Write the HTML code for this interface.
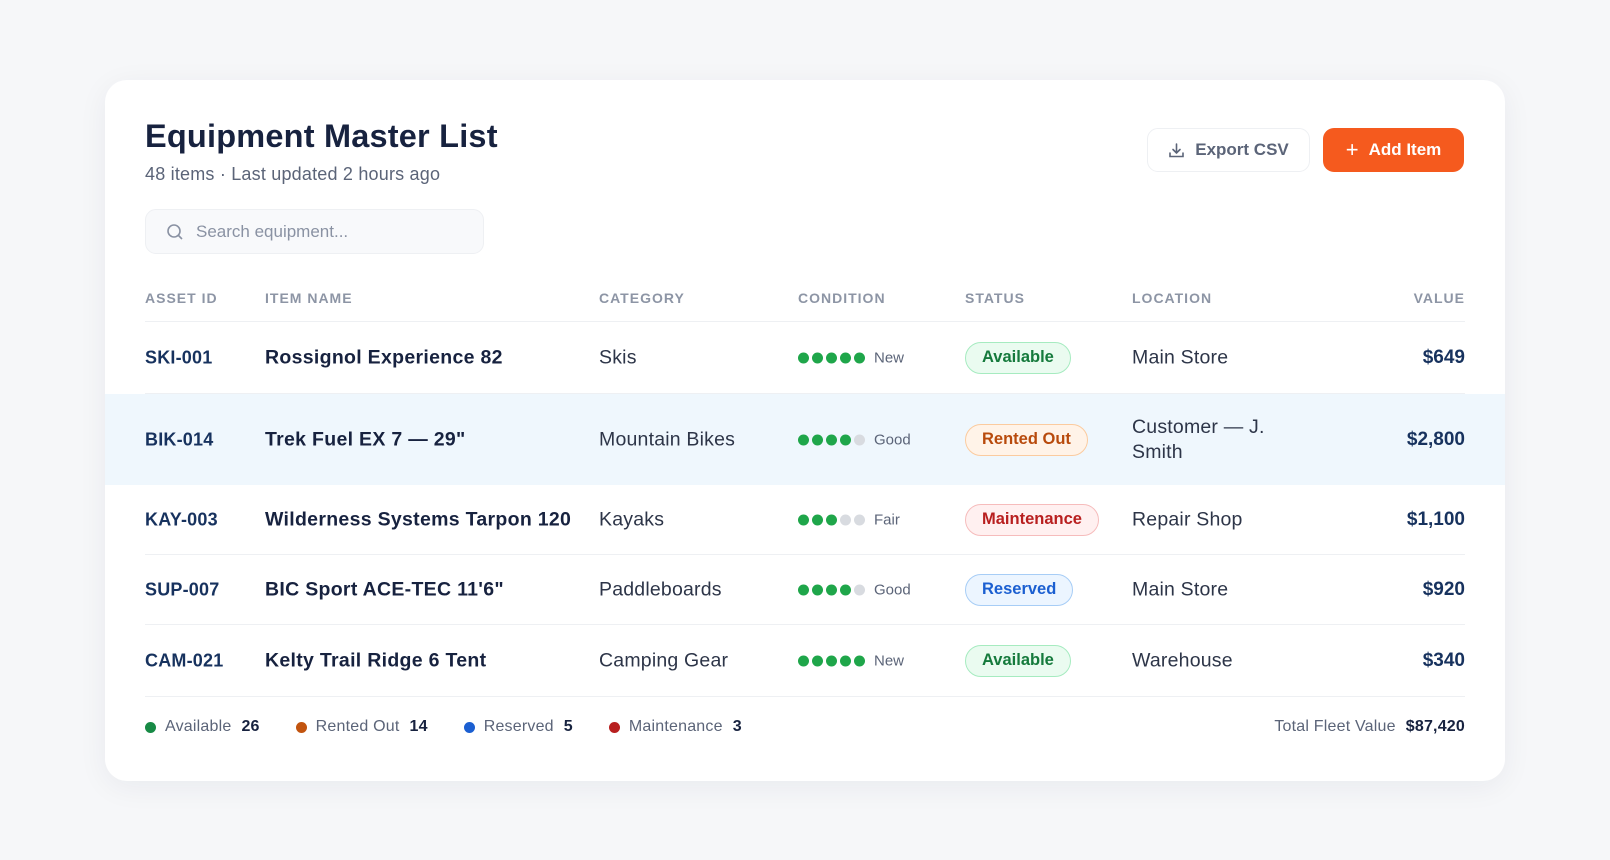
<!DOCTYPE html>
<html><head><meta charset="utf-8"><style>
*{box-sizing:border-box;margin:0;padding:0}
body{width:1610px;height:860px;background:#f6f7f9;font-family:"Liberation Sans",sans-serif;color:#1a2540;position:relative;overflow:hidden}
.card{position:absolute;left:105px;top:80px;width:1400px;height:701px;background:#fff;border-radius:22px;box-shadow:0 6px 30px rgba(20,30,60,.06)}
.abs{position:absolute}
h1{position:absolute;left:40px;top:38px;font-size:32.5px;font-weight:700;color:#17223f;letter-spacing:.2px}
.sub{left:40px;top:84px;font-size:18px;color:#5b6478;letter-spacing:.2px}
.search{left:40px;top:129px;width:339px;height:45px;background:#f8f9fb;border:1px solid #eef0f3;border-radius:11px;font-size:17px;color:#8a92a3;padding:0 0 0 50px;line-height:43px}
.search svg{position:absolute;left:20px;top:13px}
.btn{top:48px;height:44px;border-radius:11px;font-size:17px;font-weight:700;display:flex;align-items:center;justify-content:center;gap:10px}
.exp{left:1042px;width:163px;border:1.5px solid #eef0f3;color:#5b6478;background:#fff}
.add{left:1218px;width:141px;background:#f55a1e;color:#fff}
.th{top:210px;font-size:14px;font-weight:700;color:#8d95a5;letter-spacing:1px}
.row{position:absolute;left:0;width:1400px;border-bottom:1.5px solid #eef0f3}
.row.hl{background:#eff7fd}
.row>div{position:absolute;top:50%;transform:translateY(-50%)}
.id{left:40px;font-size:18px;font-weight:700;color:#17325e;letter-spacing:.2px}
.nm{left:160px;font-size:19.5px;font-weight:700;color:#17223f;letter-spacing:.3px}
.cat{left:494px;font-size:19.5px;color:#2d3548;letter-spacing:.2px}
.cond{left:693px;display:flex;align-items:center;font-size:15px;color:#5b6478}
.d{width:11px;height:11px;border-radius:50%;background:#1fa64a;margin-right:3px}
.d.o{background:#d8dbe0}
.cond span{margin-left:6px}
.st{left:860px;height:32px;border-radius:16px;padding:0 16px;font-size:16.5px;font-weight:700;line-height:29px;border:1.5px solid}
.av{background:#eafbf0;border-color:#a6ebc0;color:#157a3c}
.ro{background:#fff3e8;border-color:#fbcb9f;color:#b84a0c}
.mt{background:#fff0f0;border-color:#f6bcbc;color:#b81f1f}
.rs{background:#ecf5ff;border-color:#a7cdf6;color:#1b5fd1}
.loc{left:1027px;font-size:19.5px;color:#2d3548;line-height:25px;letter-spacing:.2px}
.val{right:40px;font-size:19px;font-weight:700;color:#17325e}
.ft{top:638px;font-size:16px;color:#5b6478;display:flex;align-items:center;letter-spacing:.2px}
.ft i{display:inline-block;width:11px;height:11px;border-radius:50%;margin-right:9px}
.ft b{color:#17223f;margin-left:10px;margin-right:36px}
</style></head><body>
<div class="card">
<h1>Equipment Master List</h1>
<div class="abs sub">48 items · Last updated 2 hours ago</div>
<div class="abs search"><svg width="18" height="18" viewBox="0 0 18 18" fill="none" stroke="#8a92a3" stroke-width="1.6"><circle cx="8" cy="8" r="6"/><path d="M12.5 12.5L16 16"/></svg>Search equipment...</div>
<div class="abs btn exp"><svg width="17" height="17" viewBox="0 0 17 17" fill="none" stroke="#5b6478" stroke-width="1.6" stroke-linecap="round"><path d="M8.5 2v9M5 7.5l3.5 3.5 3.5-3.5M2 11v3.5h13V11"/></svg>Export CSV</div>
<div class="abs btn add"><span style="font-weight:400;font-size:22px;line-height:1">+</span>Add Item</div>
<div class="abs th" style="left:40px">ASSET ID</div>
<div class="abs th" style="left:160px">ITEM NAME</div>
<div class="abs th" style="left:494px">CATEGORY</div>
<div class="abs th" style="left:693px">CONDITION</div>
<div class="abs th" style="left:860px">STATUS</div>
<div class="abs th" style="left:1027px">LOCATION</div>
<div class="abs th" style="right:40px">VALUE</div>
<div style="position:absolute;left:40px;right:40px;top:241px;border-top:1.5px solid #eef0f3"></div>

<div class="row" style="top:243px;height:71px;left:40px;width:1320px"><div class="id" style="left:0">SKI-001</div><div class="nm" style="left:120px">Rossignol Experience 82</div><div class="cat" style="left:454px">Skis</div><div class="cond" style="left:653px"><i class="d"></i><i class="d"></i><i class="d"></i><i class="d"></i><i class="d"></i><span>New</span></div><div class="st av" style="left:820px">Available</div><div class="loc" style="left:987px">Main Store</div><div class="val" style="right:0">$649</div></div>

<div class="row hl" style="top:314px;height:91px;border-bottom:none"><div class="id">BIK-014</div><div class="nm">Trek Fuel EX 7 — 29"</div><div class="cat">Mountain Bikes</div><div class="cond"><i class="d"></i><i class="d"></i><i class="d"></i><i class="d"></i><i class="d o"></i><span>Good</span></div><div class="st ro">Rented Out</div><div class="loc">Customer — J.<br>Smith</div><div class="val">$2,800</div></div>

<div class="row" style="top:405px;height:70px;left:40px;width:1320px"><div class="id" style="left:0">KAY-003</div><div class="nm" style="left:120px">Wilderness Systems Tarpon 120</div><div class="cat" style="left:454px">Kayaks</div><div class="cond" style="left:653px"><i class="d"></i><i class="d"></i><i class="d"></i><i class="d o"></i><i class="d o"></i><span>Fair</span></div><div class="st mt" style="left:820px">Maintenance</div><div class="loc" style="left:987px">Repair Shop</div><div class="val" style="right:0">$1,100</div></div>

<div class="row" style="top:475px;height:70px;left:40px;width:1320px"><div class="id" style="left:0">SUP-007</div><div class="nm" style="left:120px">BIC Sport ACE-TEC 11'6"</div><div class="cat" style="left:454px">Paddleboards</div><div class="cond" style="left:653px"><i class="d"></i><i class="d"></i><i class="d"></i><i class="d"></i><i class="d o"></i><span>Good</span></div><div class="st rs" style="left:820px">Reserved</div><div class="loc" style="left:987px">Main Store</div><div class="val" style="right:0">$920</div></div>

<div class="row" style="top:545px;height:72px;left:40px;width:1320px"><div class="id" style="left:0">CAM-021</div><div class="nm" style="left:120px">Kelty Trail Ridge 6 Tent</div><div class="cat" style="left:454px">Camping Gear</div><div class="cond" style="left:653px"><i class="d"></i><i class="d"></i><i class="d"></i><i class="d"></i><i class="d"></i><span>New</span></div><div class="st av" style="left:820px">Available</div><div class="loc" style="left:987px">Warehouse</div><div class="val" style="right:0">$340</div></div>

<div class="abs ft" style="left:40px"><i style="background:#178a45"></i>Available<b>26</b><i style="background:#c2540f"></i>Rented Out<b>14</b><i style="background:#1b5fd1"></i>Reserved<b>5</b><i style="background:#b81f1f"></i>Maintenance<b>3</b></div>
<div class="abs ft" style="right:40px">Total Fleet Value<b style="margin-right:0">$87,420</b></div>
</div>
</body></html>
